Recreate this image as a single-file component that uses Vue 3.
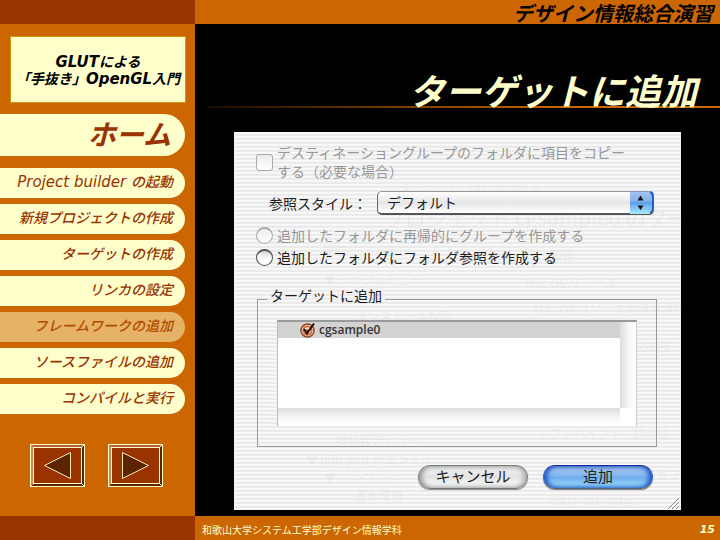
<script setup>
import { ref } from 'vue'

const chapters = [
  { latin: 'Project builder', text: 'の起動' },
  { text: '新規プロジェクトの作成' },
  { text: 'ターゲットの作成' },
  { text: 'リンカの設定' },
  { text: 'フレームワークの追加', current: true },
  { text: 'ソースファイルの追加' },
  { text: 'コンパイルと実行' },
]

const ghosts = [
  { text: 'ターゲット : cgsample0 ≑', x: 165, y: 47, size: 12 },
  { text: 'プロジェクト cgsample0 のター', x: 150, y: 76, size: 21 },
  { text: '要約', x: 88, y: 110, size: 12 },
  { text: '▼ リンカ設定', x: 266, y: 115, size: 12 },
  { text: 'Mac OS リソース', x: 291, y: 142, size: 12 },
  { text: '▼ シンプルビュー', x: 90, y: 139, size: 12 },
  { text: 'Mac OS リソースの保存場所', x: 300, y: 168, size: 12 },
  { text: 'インストール設定', x: 122, y: 175, size: 12 },
  { text: 'の制御', x: 402, y: 206, size: 12 },
  { text: '詳細設定ビュー', x: 102, y: 300, size: 12 },
  { text: '✓ プレバインド（読み込', x: 305, y: 292, size: 12 },
  { text: '▼ Info.plist のエントリ', x: 72, y: 319, size: 12 },
  { text: '▼ シンプルビ', x: 90, y: 337, size: 12 },
  { text: 'カフ', x: 422, y: 334, size: 12 },
  { text: '基本情報', x: 121, y: 355, size: 12 },
  { text: '-lGLU -lGL -lobjc', x: 312, y: 359, size: 12 },
]

const style = ref('default')
const reference = ref('')
const copyItems = ref(false)
const target = ref(true)
</script>

<template>
  <div class="slide">
    <div class="corner"></div>
    <header class="course">デザイン情報総合演習</header>

    <aside class="side">
      <div class="deck"><span class="latin">GLUT</span>による<br />「手抜き」<span class="latin">OpenGL</span>入門</div>
      <nav class="nav">
        <a class="pill home" href="#home">ホーム</a>
        <a
          v-for="c in chapters"
          :key="c.text"
          class="pill"
          :class="{ current: c.current }"
          href="#chapter"
        ><span v-if="c.latin" class="latin">{{ c.latin }}&nbsp;</span>{{ c.text }}</a>
      </nav>
      <div class="pager">
        <button class="step" type="button" aria-label="前へ">
          <svg viewBox="0 0 55 43" width="55" height="43" shape-rendering="crispEdges">
            <rect width="55" height="43" fill="#ffc" />
            <path d="M1 1H54L51 3H4Z" fill="#b26332" />
            <path d="M1 1L3 3V40L1 42Z" fill="#d08a58" />
            <path d="M54 1V42L52 40V3Z" fill="#5c2400" />
            <path d="M1 42L4 40H51L54 42Z" fill="#5c2400" />
            <rect x="3.500" y="3.500" width="48" height="36" fill="#930" stroke="#ffc" />
            <path d="M40.500 8.500V34.500L14.500 21.500Z" fill="#5c2400" stroke="#ffe9b4" shape-rendering="auto" />
          </svg>
        </button>
        <button class="step" type="button" aria-label="次へ">
          <svg viewBox="0 0 55 43" width="55" height="43" shape-rendering="crispEdges">
            <rect width="55" height="43" fill="#ffc" />
            <path d="M1 1H54L51 3H4Z" fill="#b26332" />
            <path d="M1 1L3 3V40L1 42Z" fill="#d08a58" />
            <path d="M54 1V42L52 40V3Z" fill="#5c2400" />
            <path d="M1 42L4 40H51L54 42Z" fill="#5c2400" />
            <rect x="3.500" y="3.500" width="48" height="36" fill="#930" stroke="#ffc" />
            <path d="M14.500 8.500V34.500L40.500 21.500Z" fill="#5c2400" stroke="#ffe9b4" shape-rendering="auto" />
          </svg>
        </button>
      </div>
    </aside>

    <main class="content">
      <h1 class="title">ターゲットに追加</h1>
      <form class="dialog" @submit.prevent>
        <div class="ghosts" aria-hidden="true">
          <span
            v-for="(g, i) in ghosts"
            :key="i"
            class="ghost"
            :style="{ left: g.x + 'px', top: g.y + 'px', fontSize: g.size + 'px' }"
          >{{ g.text }}</span>
        </div>

        <label class="choice copy dim">
          <input v-model="copyItems" class="box" type="checkbox" disabled />
          <span>デスティネーショングループのフォルダに項目をコピー<br />する（必要な場合）</span>
        </label>

        <div class="field">
          <label for="ref-style">参照スタイル：</label>
          <div class="picker">
            <select id="ref-style" v-model="style">
              <option value="default">デフォルト</option>
            </select>
            <svg class="arrows" viewBox="0 0 24 24" width="24" height="24" aria-hidden="true">
              <defs>
                <linearGradient id="aqua-cap" x1="0" y1="0" x2="0" y2="1">
                  <stop offset="0" stop-color="#a9c4ee" />
                  <stop offset="0.450" stop-color="#7fb2ee" />
                  <stop offset="0.500" stop-color="#5d9fe8" />
                  <stop offset="1" stop-color="#a9ecff" />
                </linearGradient>
              </defs>
              <path d="M0 0H19Q24 0 24 5V18Q24 23 19 23H0Z" fill="url(#aqua-cap)" />
              <path d="M20 1Q23 2 23 6V17Q23 21 20 22" fill="none" stroke="#1f5fc4" stroke-width="2" />
              <path d="M0 0.500H19" fill="none" stroke="#8a93b8" />
              <path d="M0 23.500H19Q22 23 23.500 20" fill="none" stroke="#555" />
              <path d="M10.500 4.500L13.500 9.500H7.500ZM10.500 19L13.500 14.500H7.500Z" fill="#111" />
            </svg>
          </div>
        </div>

        <label class="choice dim">
          <input v-model="reference" class="dot" type="radio" name="reference" value="group" disabled />
          <span>追加したフォルダに再帰的にグループを作成する</span>
        </label>
        <label class="choice">
          <input v-model="reference" class="dot" type="radio" name="reference" value="folder" />
          <span>追加したフォルダにフォルダ参照を作成する</span>
        </label>

        <fieldset class="targets">
          <legend>ターゲットに追加</legend>
          <div class="list">
            <div class="rows">
              <label class="row">
                <input v-model="target" class="tick" type="checkbox" />
                <svg viewBox="0 0 16 16" width="16" height="16" aria-hidden="true">
                  <circle cx="7.500" cy="8.500" r="6.500" fill="#fff" stroke="#8a4a2a" stroke-width="1.500" />
                  <circle cx="7.500" cy="8.500" r="4.200" fill="#fbe3d3" stroke="#d8692c" stroke-width="2" />
                  <circle cx="7.500" cy="8.500" r="1.600" fill="#c65a24" />
                  <path d="M4 7L7 11.500L14 1.500" fill="none" stroke="#1a120c" stroke-width="2" />
                </svg>
                <span>cgsample0</span>
              </label>
            </div>
            <div class="vbar"></div>
            <div class="hbar"></div>
            <div class="nook"></div>
          </div>
        </fieldset>

        <div class="actions">
          <button class="aqua plain" type="button">キャンセル</button>
          <button class="aqua blue" type="submit">追加</button>
        </div>
        <svg class="grip" viewBox="0 0 14 14" width="14" height="14" aria-hidden="true">
          <path d="M1 13L12 2M5 13L12 6M9 13L12 10" stroke="#888" fill="none" />
          <path d="M2 14L13 3M6 14L13 7" stroke="#fff" fill="none" />
        </svg>
      </form>
    </main>

    <div class="corner"></div>
    <footer class="foot">
      <span>和歌山大学システム工学部デザイン情報学科</span>
      <span class="page">15</span>
    </footer>
  </div>
</template>

<style>
body {
  margin: 0;
  background: #000;
}
</style>

<style scoped>
.slide {
  display: grid;
  grid-template-columns: 195px 1fr;
  grid-template-rows: 24px 1fr 24px;
  min-height: 100vh;
  background: #000;
  font-family: "DejaVu Sans", "Noto Sans CJK JP", sans-serif;
}
.corner {
  background: #930;
}
.course {
  padding-right: 7px;
  background: #c60;
  color: #000;
  font: italic 700 20px/26px "Noto Sans CJK JP", sans-serif;
  text-align: right;
}
.side {
  background: #c60;
}
.deck {
  margin: 12px 9px 0 10px;
  padding: 16px 0 15px;
  border: 1px solid #c90;
  background: #ffc;
  color: #000;
  font: italic 700 14px/17px "Noto Sans CJK JP", sans-serif;
  text-align: center;
  white-space: nowrap;
}
.nav {
  display: flex;
  flex-direction: column;
  gap: 6px;
  margin-top: 11px;
  padding-right: 10px;
}
.pill {
  height: 30px;
  padding-right: 12px;
  border-radius: 0 15px 15px 0;
  background: #ffc;
  color: #930;
  font: italic 500 14px/27px "Noto Sans CJK JP", sans-serif;
  text-align: right;
  text-decoration: none;
  white-space: nowrap;
}
.latin {
  font-family: "DejaVu Sans", sans-serif;
  font-size: 15px;
  line-height: 1;
}
.home {
  height: 42px;
  margin-bottom: 6px;
  padding-right: 14px;
  border-radius: 0 21px 21px 0;
  font-size: 28px;
  font-weight: 700;
  line-height: 39px;
}
.current {
  background: #e5b266;
  color: #b24d00;
}
.pager {
  display: flex;
  gap: 23px;
  margin: 30px 0 0 30px;
}
.step {
  display: block;
  padding: 0;
  border: 0;
  background: none;
}
.step svg {
  display: block;
}
.content {
  padding: 0 39px 6px;
}
.title {
  margin: 0 -39px 0 -25px;
  padding: 41px 23px 0 0;
  background: linear-gradient(90deg, #1a0d00, #c60 70%) 0 82px / 100% 2px no-repeat;
  color: #ffc;
  font: italic 700 36px/48px "Noto Sans CJK JP", sans-serif;
  text-align: right;
}
.dialog {
  position: relative;
  margin-top: 19px;
  padding: 11px 24px 21px 22px;
  background: repeating-linear-gradient(#fafafa 0 1px, #f4f4f4 1px 2px, #ebebeb 2px 4px);
  color: #1c1c1c;
  font: 14px/19px "Noto Sans CJK JP", sans-serif;
}
.ghosts {
  position: absolute;
  inset: 0;
  overflow: hidden;
}
.ghost {
  position: absolute;
  color: rgba(0, 0, 0, 0.050);
  line-height: 18px;
  white-space: nowrap;
}
.choice {
  position: relative;
  display: flex;
  align-items: center;
  gap: 4px;
  line-height: 22px;
  white-space: nowrap;
}
.copy {
  line-height: 19px;
}
.dim {
  color: #979797;
}
.choice input {
  flex: none;
  appearance: none;
  width: 17px;
  height: 17px;
  margin: 0;
  border: 1px solid #555;
  background: linear-gradient(#d8d8d8, #fff 60%);
}
.choice .box {
  border-radius: 3px;
}
.choice .dot {
  border-width: 2px 1px 1px;
  border-radius: 50%;
}
.choice input:disabled {
  border-color: #aaa;
  background: linear-gradient(#ececec, #fff);
}
.field {
  position: relative;
  display: flex;
  align-items: center;
  justify-content: space-between;
  margin: 10px 3px 9px 13px;
  white-space: nowrap;
}
.picker {
  display: grid;
  width: 277px;
}
.picker select,
.arrows {
  grid-area: 1 / 1;
}
.picker select {
  appearance: none;
  height: 24px;
  padding: 0 30px 1px 9px;
  border: 1px solid #999;
  border-bottom: 2px solid #555;
  border-left-color: #666;
  border-radius: 5px;
  background: linear-gradient(#fff, #e6e6e6 50%, #fff);
  color: #1c1c1c;
  font: 14px/20px "Noto Sans CJK JP", sans-serif;
}
.arrows {
  justify-self: end;
  pointer-events: none;
}
.targets {
  position: relative;
  margin: 19px 0 0 1px;
  padding: 8px 19px 20px;
  border: 1px solid #999;
}
.targets legend {
  margin-left: -10px;
  padding: 0 3px 8px;
  line-height: 17px;
}
.list {
  display: grid;
  grid-template-columns: 1fr 16px;
  grid-template-rows: 86px 18px;
  border-top: 2px solid #999;
  border-left: 1px solid #bbb;
  border-right: 1px solid #ccc;
}
.rows {
  background: #fff;
}
.row {
  display: flex;
  align-items: center;
  gap: 3px;
  height: 16px;
  padding-left: 22px;
  background: #d3d3d3;
  color: #333;
  font: 600 12px/16px "Open Sans", sans-serif;
}
.tick {
  appearance: none;
  width: 0;
  height: 0;
  margin: 0 -3px 0 0;
}
.vbar {
  background: linear-gradient(90deg, #dcdcdc, #f5f5f5 50%, #fff);
}
.hbar {
  background: linear-gradient(#dcdcdc, #f5f5f5 50%, #fff);
}
.nook {
  background: #fff;
}
.actions {
  position: relative;
  display: flex;
  justify-content: flex-end;
  gap: 15px;
  margin: 18px 4px 0 0;
}
.aqua {
  width: 110px;
  height: 24px;
  padding: 0 0 2px;
  border: 1px solid #777;
  border-radius: 12px;
  color: #222;
  font: 15px/20px "Noto Sans CJK JP", sans-serif;
}
.plain {
  background: linear-gradient(#f4f4f4, #e2e2e2 50%, #fff);
  box-shadow: inset 3px 0 5px #999, inset -3px 0 5px #aaa, 0 1px 1px #888;
}
.blue {
  border-color: #10279e #3a62b4 #567;
  background: linear-gradient(#b5cff2, #7fb4f0 45%, #6fadee 55%, #a8ecff);
  box-shadow: inset 3px 0 5px #1d55c0, inset -3px 0 5px #1d55c0, 0 1px 1px #777;
}
.grip {
  position: absolute;
  right: 0;
  bottom: 0;
}
.foot {
  display: flex;
  align-items: center;
  justify-content: space-between;
  padding: 4px 5px 0 7px;
  background: #c60;
  color: #ffc;
  font: 10px/20px "Noto Sans CJK JP", sans-serif;
}
.page {
  font: italic 700 11px/20px "DejaVu Sans", sans-serif;
}
</style>
